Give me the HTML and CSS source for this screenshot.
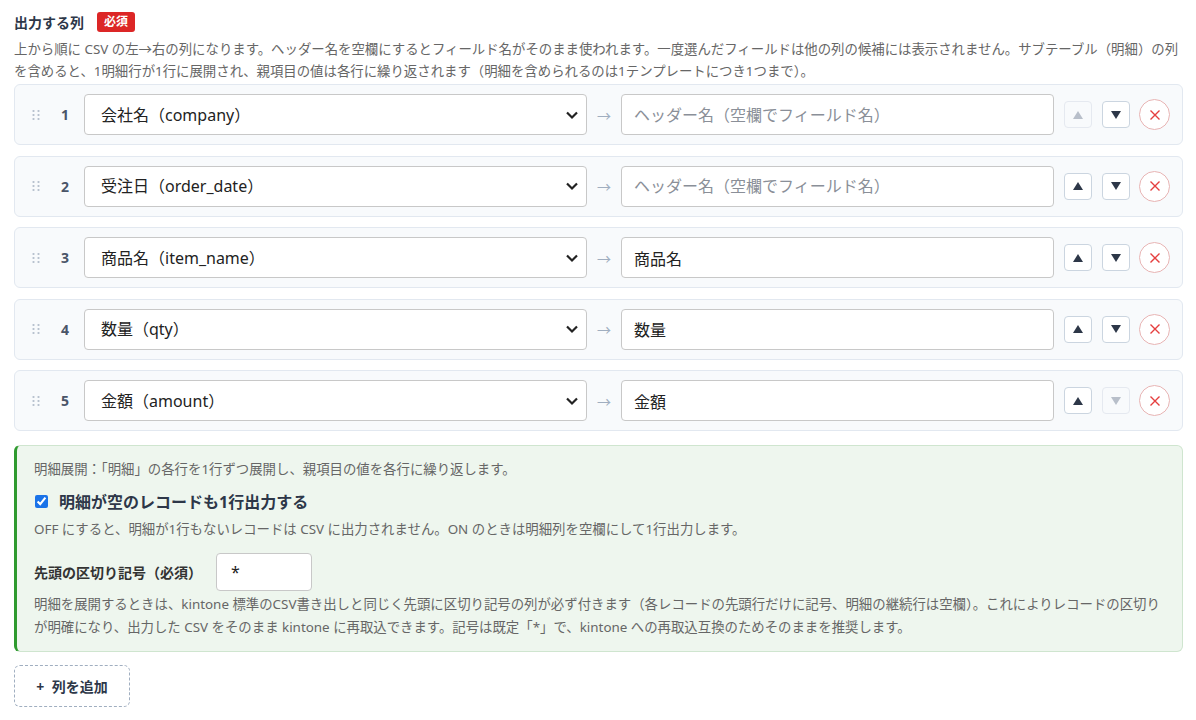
FILE: index.html
```html
<!DOCTYPE html>
<html lang="ja">
<head>
  <meta charset="UTF-8">
  <meta name="viewport" content="width=device-width, initial-scale=1.0">
  <title>出力する列</title>
  <link rel="stylesheet" href="styles.css">
</head>
<body>
  <div class="section">
    <div class="section-title">
      <span>出力する列</span>
      <span class="badge">必須</span>
    </div>
    <p class="hint">上から順に CSV の左→右の列になります。ヘッダー名を空欄にするとフィールド名がそのまま使われます。一度選んだフィールドは他の列の候補には表示されません。サブテーブル（明細）の列を含めると、1明細行が1行に展開され、親項目の値は各行に繰り返されます（明細を含められるのは1テンプレートにつき1つまで）。</p>

    <div class="columns">
      <div class="col-row">
        <span class="handle"></span>
        <span class="num">1</span>
        <select class="field"><option>会社名（company）</option></select>
        <span class="arrow">→</span>
        <input class="header" type="text" placeholder="ヘッダー名（空欄でフィールド名）">
        <button class="move" disabled><span class="tri up"></span></button>
        <button class="move"><span class="tri down"></span></button>
        <button class="remove"><svg width="12" height="12" viewBox="0 0 12 12"><path d="M1.5 1.5l9 9M10.5 1.5l-9 9" stroke="#e53e3e" stroke-width="1.4"/></svg></button>
      </div>
      <div class="col-row">
        <span class="handle"></span>
        <span class="num">2</span>
        <select class="field"><option>受注日（order_date）</option></select>
        <span class="arrow">→</span>
        <input class="header" type="text" placeholder="ヘッダー名（空欄でフィールド名）">
        <button class="move"><span class="tri up"></span></button>
        <button class="move"><span class="tri down"></span></button>
        <button class="remove"><svg width="12" height="12" viewBox="0 0 12 12"><path d="M1.5 1.5l9 9M10.5 1.5l-9 9" stroke="#e53e3e" stroke-width="1.4"/></svg></button>
      </div>
      <div class="col-row">
        <span class="handle"></span>
        <span class="num">3</span>
        <select class="field"><option>商品名（item_name）</option></select>
        <span class="arrow">→</span>
        <input class="header" type="text" value="商品名">
        <button class="move"><span class="tri up"></span></button>
        <button class="move"><span class="tri down"></span></button>
        <button class="remove"><svg width="12" height="12" viewBox="0 0 12 12"><path d="M1.5 1.5l9 9M10.5 1.5l-9 9" stroke="#e53e3e" stroke-width="1.4"/></svg></button>
      </div>
      <div class="col-row">
        <span class="handle"></span>
        <span class="num">4</span>
        <select class="field"><option>数量（qty）</option></select>
        <span class="arrow">→</span>
        <input class="header" type="text" value="数量">
        <button class="move"><span class="tri up"></span></button>
        <button class="move"><span class="tri down"></span></button>
        <button class="remove"><svg width="12" height="12" viewBox="0 0 12 12"><path d="M1.5 1.5l9 9M10.5 1.5l-9 9" stroke="#e53e3e" stroke-width="1.4"/></svg></button>
      </div>
      <div class="col-row">
        <span class="handle"></span>
        <span class="num">5</span>
        <select class="field"><option>金額（amount）</option></select>
        <span class="arrow">→</span>
        <input class="header" type="text" value="金額">
        <button class="move"><span class="tri up"></span></button>
        <button class="move" disabled><span class="tri down"></span></button>
        <button class="remove"><svg width="12" height="12" viewBox="0 0 12 12"><path d="M1.5 1.5l9 9M10.5 1.5l-9 9" stroke="#e53e3e" stroke-width="1.4"/></svg></button>
      </div>
    </div>

    <div class="expand-panel">
      <p class="panel-note">明細展開：「明細」の各行を1行ずつ展開し、親項目の値を各行に繰り返します。</p>
      <label class="check">
        <input type="checkbox" checked>
        <span>明細が空のレコードも1行出力する</span>
      </label>
      <p class="panel-note">OFF にすると、明細が1行もないレコードは CSV に出力されません。ON のときは明細列を空欄にして1行出力します。</p>
      <div class="sep-row">
        <span class="sep-label">先頭の区切り記号（必須）</span>
        <input class="sep-input" type="text" value="*">
      </div>
      <p class="panel-note">明細を展開するときは、kintone 標準のCSV書き出しと同じく先頭に区切り記号の列が必ず付きます（各レコードの先頭行だけに記号、明細の継続行は空欄）。これによりレコードの区切りが明確になり、出力した CSV をそのまま kintone に再取込できます。記号は既定「*」で、kintone への再取込互換のためそのままを推奨します。</p>
    </div>

    <button class="add-col">+&nbsp;&nbsp;列を追加</button>
  </div>
</body>
</html>
```

FILE: styles.css
```css
body {
  margin: 0;
  font-family: "Noto Sans", "Noto Sans CJK JP", sans-serif;
  color: #2d3748;
  background: #fff;
}
.section {
  padding: 12px 13px 12px 14px;
}
.section-title {
  display: flex;
  align-items: center;
  gap: 13px;
  font-size: 14px;
  font-weight: bold;
  height: 20px;
}
.badge {
  background: #dc2626;
  color: #fff;
  font-size: 12px;
  padding: 0 7px;
  line-height: 20px;
  border-radius: 3px;
}
.hint {
  margin: 6px 0 0;
  font-size: 13.4px;
  line-height: 22px;
  color: #666;
}
.columns {
  display: flex;
  flex-direction: column;
  gap: 10.5px;
  margin-top: 2px;
}
.col-row {
  display: flex;
  align-items: center;
  gap: 9px;
  padding: 9px 12px 9px 16px;
  background: #f8fafc;
  border: 1px solid #e2e8f0;
  border-radius: 6px;
}
.handle {
  width: 10px;
  height: 12px;
  background-image: radial-gradient(circle, #b8c2cf 1px, transparent 1.2px);
  background-size: 5px 4px;
}
.num {
  width: 30px;
  text-align: center;
  font-size: 14px;
  font-weight: bold;
  color: #4a5568;
  margin-right: -5px;
}
.field,
.header {
  height: 41px;
  box-sizing: border-box;
  border: 1px solid #c8c8c8;
  border-radius: 4px;
  background-color: #fff;
  font-family: inherit;
  font-size: 16px;
  color: #222;
}
.field {
  flex: 0 0 503px;
  appearance: none;
  padding: 0 36px 0 16px;
  background-image: url("data:image/svg+xml,%3Csvg xmlns='http://www.w3.org/2000/svg' width='14' height='10' viewBox='0 0 14 10'%3E%3Cpath d='M2 2.5l5 5 5-5' fill='none' stroke='%23222' stroke-width='2.2'/%3E%3C/svg%3E");
  background-repeat: no-repeat;
  background-position: right 7px center;
}
.header {
  flex: 1 1 0;
  min-width: 0;
  padding: 0 12px;
}
.header::placeholder {
  color: #8a8f98;
}
.arrow {
  width: 16px;
  text-align: center;
  color: #a0aec0;
  font-size: 14px;
}
.move {
  width: 28px;
  height: 27px;
  padding: 0;
  border: 1px solid #cbd5e0;
  border-radius: 4px;
  background: #fff;
  display: flex;
  align-items: center;
  justify-content: center;
  margin-left: 1px;
}
.move:disabled {
  border-color: #e5e9f0;
  background: #f8fafc;
}
.tri {
  width: 0;
  height: 0;
  border-left: 5px solid transparent;
  border-right: 5px solid transparent;
}
.tri.up {
  border-bottom: 8px solid #2d3748;
}
.tri.down {
  border-top: 8px solid #2d3748;
}
.move:disabled .tri.up {
  border-bottom-color: #b8bfca;
}
.move:disabled .tri.down {
  border-top-color: #b8bfca;
}
.remove {
  width: 31px;
  height: 31px;
  padding: 0;
  border: 1px solid #e8b4b4;
  border-radius: 50%;
  background: #fff;
  display: flex;
  align-items: center;
  justify-content: center;
}
.expand-panel {
  margin-top: 14px;
  padding: 12px 16px 12px 17px;
  background: #eef6ee;
  border: 1px solid #cfe5cf;
  border-left: 3px solid #2f9a2f;
  border-radius: 6px;
}
.panel-note {
  margin: 0;
  font-size: 13.4px;
  line-height: 23px;
  color: #666;
}
.check {
  display: flex;
  align-items: center;
  gap: 11px;
  margin: 8px 0 5px;
  font-size: 16px;
  font-weight: bold;
  color: #2d3748;
}
.check input {
  width: 13px;
  height: 13px;
  margin: 0 0 0 1px;
  accent-color: #1a73e8;
}
.sep-row {
  display: flex;
  align-items: center;
  gap: 14px;
  margin: 12px 0 2px;
}
.sep-label {
  font-size: 14px;
  font-weight: bold;
  color: #333;
}
.sep-input {
  width: 96px;
  height: 38px;
  box-sizing: border-box;
  border: 1px solid #c8c8c8;
  border-radius: 4px;
  padding: 0 14px;
  font-family: inherit;
  font-size: 16px;
  color: #222;
}
.add-col {
  margin-top: 13px;
  width: 116px;
  height: 42px;
  border: 1px dashed #a0aec0;
  border-radius: 6px;
  background: #fff;
  font-family: inherit;
  font-size: 14px;
  font-weight: bold;
  color: #2d3748;
}
```
